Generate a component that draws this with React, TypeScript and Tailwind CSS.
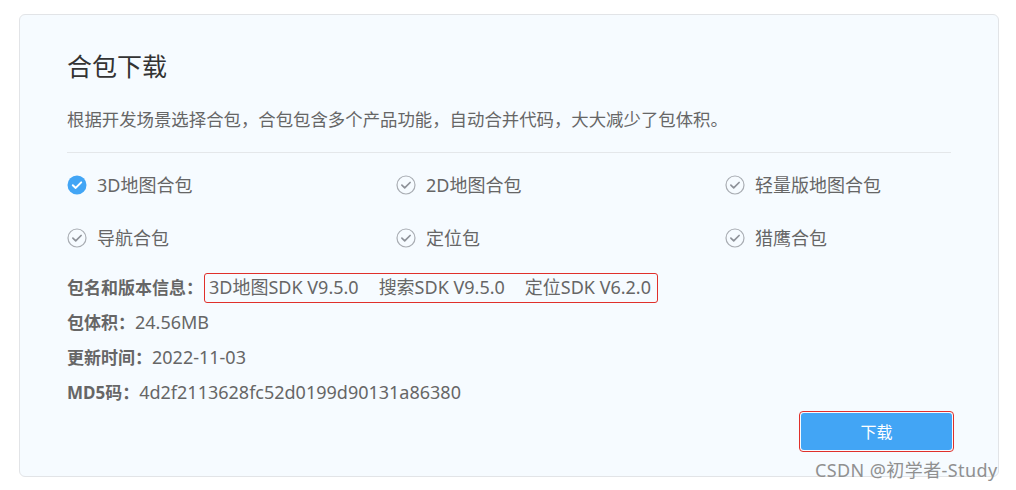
import React from "react";

const font = { fontFamily: '"Noto Sans", "Noto Sans CJK SC", sans-serif' };

function CheckIcon({ checked }: { checked: boolean }) {
  if (checked) {
    return (
      <svg width="20" height="20" viewBox="0 0 20 20" className="shrink-0">
        <circle cx="10" cy="10" r="9.5" fill="#42a5f5" />
        <path d="M5.8 10.2 L8.7 12.9 L14.2 7.4" fill="none" stroke="#fff" strokeWidth="2" strokeLinecap="round" strokeLinejoin="round" />
      </svg>
    );
  }
  return (
    <svg width="20" height="20" viewBox="0 0 20 20" className="shrink-0">
      <circle cx="10" cy="10" r="9" fill="none" stroke="#a9adb3" strokeWidth="1.2" />
      <path d="M5.9 10.2 L8.7 12.8 L14.1 7.5" fill="none" stroke="#8d9198" strokeWidth="1.7" strokeLinecap="round" strokeLinejoin="round" />
    </svg>
  );
}

const options = [
  { label: "3D地图合包", checked: true },
  { label: "2D地图合包", checked: false },
  { label: "轻量版地图合包", checked: false },
  { label: "导航合包", checked: false },
  { label: "定位包", checked: false },
  { label: "猎鹰合包", checked: false },
];

export default function App() {
  return (
    <div className="relative w-[1016px] h-[490px] bg-white overflow-hidden" style={font}>
      <div className="pt-[14px] pl-[19px]">
        <div className="w-[980px] h-[463px] rounded-[6px] border border-[#e2e4e7] bg-[#f6fbff] pt-[34px] pl-[47px] pr-[47px]">
          <h1 className="text-[25px] leading-[34px] text-[#333333] font-normal">合包下载</h1>
          <p className="mt-[23px] text-[17.4px] leading-[26px] text-[#666666]">
            根据开发场景选择合包，合包包含多个产品功能，自动合并代码，大大减少了包体积。
          </p>
          <div className="mt-[20px] border-t border-[#e4e7ea]" />
          <div className="mt-[19px] grid grid-cols-[329px_329px_1fr] gap-y-[27px]">
            {options.map((o) => (
              <div key={o.label} className="flex items-center gap-[10px] h-[26px]">
                <CheckIcon checked={o.checked} />
                <span className="text-[18px] leading-[26px] text-[#666666]">{o.label}</span>
              </div>
            ))}
          </div>
          <div className="mt-[19px] flex flex-col text-[18px] text-[#666666]">
            <div className="h-[35px] flex items-center">
              <span className="font-bold text-[17px]">包名和版本信息：</span>
              <span className="ml-[1px] h-[30px] flex items-center rounded-[3px] border border-[#e0302b] pl-[4px] pr-[6px] gap-[20px]">
                <span>3D地图SDK V9.5.0</span>
                <span>搜索SDK V9.5.0</span>
                <span>定位SDK V6.2.0</span>
              </span>
            </div>
            <div className="h-[35px] flex items-center">
              <span className="font-bold text-[17px]">包体积：</span>
              <span>24.56MB</span>
            </div>
            <div className="h-[35px] flex items-center">
              <span className="font-bold text-[17px]">更新时间：</span>
              <span>2022-11-03</span>
            </div>
            <div className="h-[35px] flex items-center">
              <span className="font-bold text-[17px]">MD5码：</span>
              <span>4d2f2113628fc52d0199d90131a86380</span>
            </div>
          </div>
          <div className="mt-[1px] flex justify-end -mr-[3px]">
            <div className="rounded-[4px] border border-[#e0302b] p-[1px]">
              <button className="w-[151px] h-[37px] rounded-[3px] bg-[#42a5f5] text-white text-[16px] leading-none">
                下载
              </button>
            </div>
          </div>
        </div>
      </div>
      <div className="absolute left-[815px] top-[458px] text-[18px] tracking-[0.4px] leading-[24px] text-[#909090] whitespace-nowrap">
        CSDN @初学者-Study
      </div>
    </div>
  );
}
